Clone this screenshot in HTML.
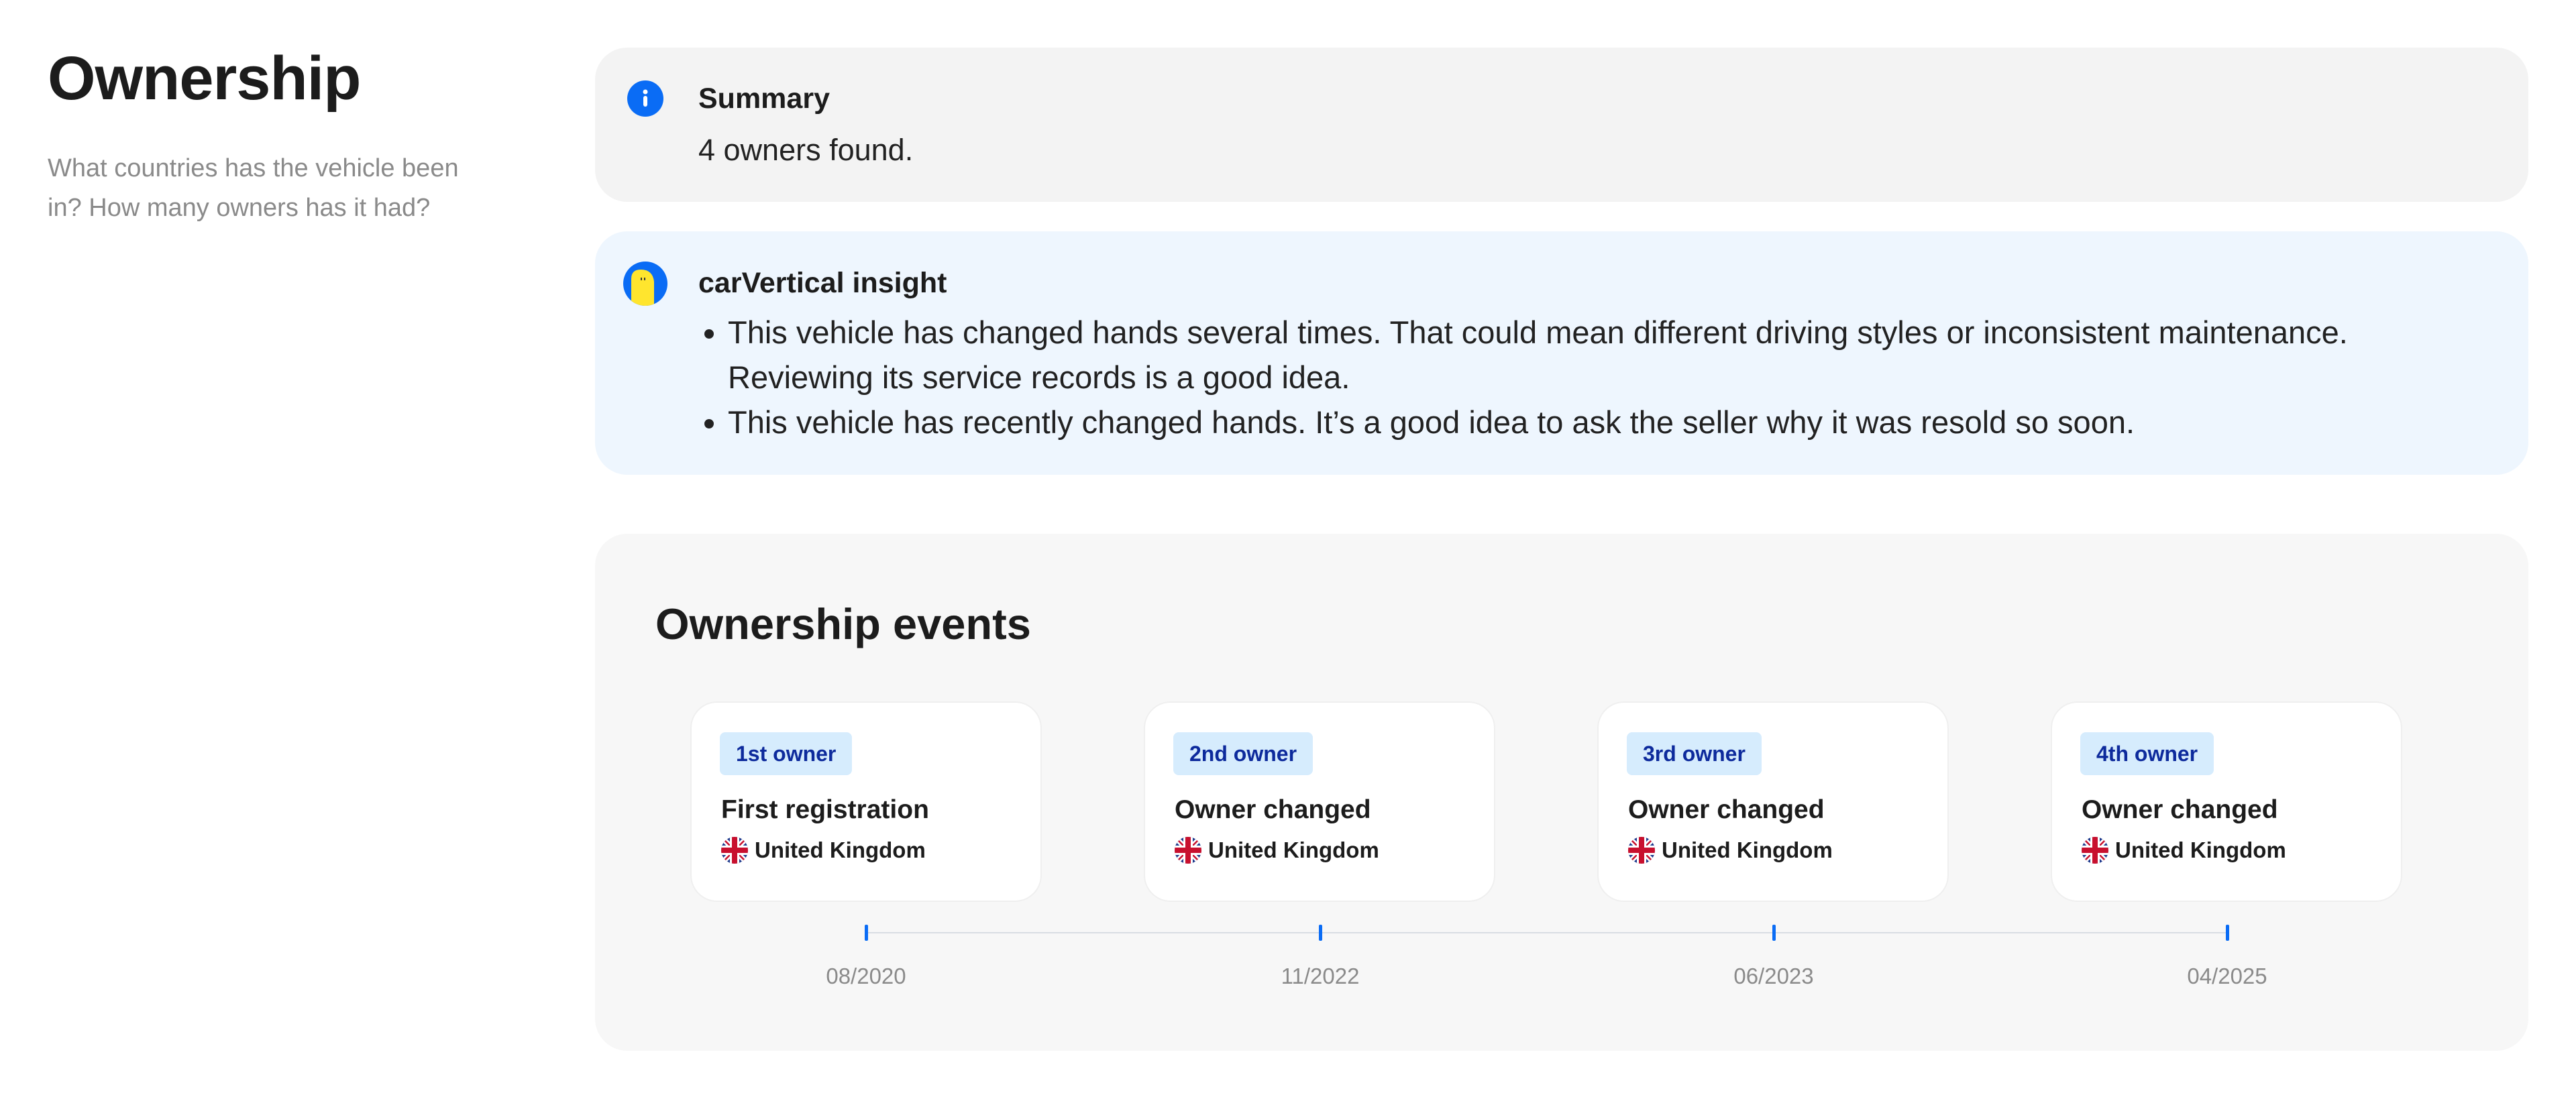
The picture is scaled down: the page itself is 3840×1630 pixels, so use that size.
<!DOCTYPE html>
<html><head><meta charset="utf-8"><style>
*{margin:0;padding:0;box-sizing:border-box}
body{width:3840px;height:1630px;background:#fff;font-family:"Liberation Sans",sans-serif;color:#1c1c1c;position:relative;overflow:hidden}
.a{position:absolute}
h1{position:absolute;left:71px;top:71px;font-size:92px;font-weight:700;line-height:1;letter-spacing:-1px}
.sub{left:71px;top:222px;width:640px;font-size:38px;line-height:59px;color:#8a8a8a}
.box{position:absolute;left:887px;width:2882px;border-radius:48px}
.ic{position:absolute;left:935px;width:54px;height:54px;border-radius:50%}
.h{position:absolute;left:1041px;font-size:43px;font-weight:700;line-height:1}
.t{font-size:45px;line-height:67px;color:#222}
.card{position:absolute;top:1046px;width:524px;height:299px;background:#fff;border:2px solid #efefef;border-radius:40px}
.badge{position:absolute;left:42px;top:44px;height:64px;padding:0 24px;background:#d6ecfd;border-radius:8px;color:#0d2a9c;font-size:32px;font-weight:700;line-height:64px}
.ct{position:absolute;left:44px;top:140px;font-size:39px;font-weight:700;line-height:1;color:#1c1c1c}
.cc{position:absolute;left:44px;top:200px;font-size:33px;font-weight:700;line-height:40px;display:flex;align-items:center;gap:10px}
.tick{position:absolute;top:1379px;width:5px;height:24px;background:#0a6cf5;border-radius:2px}
.d{position:absolute;top:1437px;width:200px;text-align:center;font-size:33px;color:#8a8a8a}
</style></head><body>
<h1>Ownership</h1>
<div class="a sub">What countries has the vehicle been in? How many owners has it had?</div>

<div class="box" style="top:71px;height:230px;background:#f3f3f3"></div>
<div class="ic" style="top:120px;background:#0a6cf5"><svg width="54" height="54" viewBox="0 0 54 54"><circle cx="27" cy="17" r="3.5" fill="#fff"/><rect x="24" y="23" width="6" height="16" rx="3" fill="#fff"/></svg></div>
<div class="h" style="top:126px">Summary</div>
<div class="a t" style="left:1041px;top:190px">4 owners found.</div>

<div class="box" style="top:345px;height:363px;background:#eef6fe"></div>
<div class="ic" style="top:390px;width:66px;height:66px;left:929px;background:#0a6cf5;overflow:hidden"><svg width="66" height="66" viewBox="0 0 66 66"><path d="M12 66 V26 Q12 12 26 12 Q44 12 46 30 V66Z" fill="#ffe52e"/><rect x="26" y="24" width="2" height="4" fill="#333"/><rect x="31" y="24" width="2" height="4" fill="#333"/></svg></div>
<div class="h" style="top:401px">carVertical insight</div>
<ul class="a t" style="left:1085px;top:462px;width:2520px;list-style:disc;font-size:47px">
<li>This vehicle has changed hands several times. That could mean different driving styles or inconsistent maintenance. Reviewing its service records is a good idea.</li>
<li>This vehicle has recently changed hands. It’s a good idea to ask the seller why it was resold so soon.</li>
</ul>

<div class="box" style="top:796px;height:771px;background:#f7f7f7"></div>
<div class="a" style="left:977px;top:898px;font-size:65px;font-weight:700;line-height:1">Ownership events</div>

<svg width="0" height="0" style="position:absolute"><defs><symbol id="uk" viewBox="0 0 40 40"><clipPath id="cl"><circle cx="20" cy="20" r="20"/></clipPath><g clip-path="url(#cl)"><rect width="40" height="40" fill="#1f3a8c"/><path d="M0 0L40 40M40 0L0 40" stroke="#fff" stroke-width="8"/><path d="M0 0L40 40M40 0L0 40" stroke="#c8102e" stroke-width="2.5"/><rect x="13" y="0" width="14" height="40" fill="#fff"/><rect x="0" y="13" width="40" height="14" fill="#fff"/><rect x="16" y="0" width="8" height="40" fill="#c8102e"/><rect x="0" y="16" width="40" height="8" fill="#c8102e"/></g></symbol></defs></svg>

<div class="card" style="left:1029px"><div class="badge">1st owner</div><div class="ct">First registration</div><div class="cc"><svg width="40" height="40"><use href="#uk"/></svg>United Kingdom</div></div>
<div class="card" style="left:1705px"><div class="badge">2nd owner</div><div class="ct">Owner changed</div><div class="cc"><svg width="40" height="40"><use href="#uk"/></svg>United Kingdom</div></div>
<div class="card" style="left:2381px"><div class="badge">3rd owner</div><div class="ct">Owner changed</div><div class="cc"><svg width="40" height="40"><use href="#uk"/></svg>United Kingdom</div></div>
<div class="card" style="left:3057px"><div class="badge">4th owner</div><div class="ct">Owner changed</div><div class="cc"><svg width="40" height="40"><use href="#uk"/></svg>United Kingdom</div></div>

<div class="a" style="left:1291px;top:1390px;width:2032px;height:2px;background:#d9dde3"></div>
<div class="tick" style="left:1289px"></div>
<div class="tick" style="left:1966px"></div>
<div class="tick" style="left:2642px"></div>
<div class="tick" style="left:3318px"></div>
<div class="d" style="left:1191px">08/2020</div>
<div class="d" style="left:1868px">11/2022</div>
<div class="d" style="left:2544px">06/2023</div>
<div class="d" style="left:3220px">04/2025</div>
</body></html>
